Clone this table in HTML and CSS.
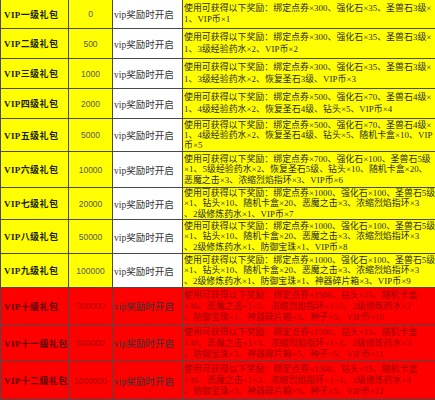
FILE: index.html
```html
<!DOCTYPE html>
<html lang="zh-CN">
<head>
<meta charset="utf-8">
<link rel="stylesheet" href="styles.css">
</head>
<body>
<table class="gifts">
<colgroup><col class="c1"><col class="c2"><col class="c3"><col class="c4"></colgroup>
<tr class="two first">
<td class="name">VIP一级礼包</td><td class="num">0</td><td class="open">vip奖励时开启</td>
<td class="desc">使用可获得以下奖励：绑定点券×300、强化石×35、圣兽石3级×<br>1、VIP币×1</td></tr>
<tr class="two">
<td class="name">VIP二级礼包</td><td class="num">500</td><td class="open">vip奖励时开启</td>
<td class="desc">使用可获得以下奖励：绑定点券×300、强化石×35、圣兽石3级×<br>1、3级经验药水×2、VIP币×2</td></tr>
<tr class="two">
<td class="name">VIP三级礼包</td><td class="num">1000</td><td class="open">vip奖励时开启</td>
<td class="desc">使用可获得以下奖励：绑定点券×300、强化石×35、圣兽石3级×<br>1、3级经验药水×2、恢复圣石3级、VIP币×3</td></tr>
<tr class="two">
<td class="name">VIP四级礼包</td><td class="num">2000</td><td class="open">vip奖励时开启</td>
<td class="desc">使用可获得以下奖励：绑定点券×500、强化石×70、圣兽石4级×<br>1、4级经验药水×2、恢复圣石4级、钻头×5、VIP币×4</td></tr>
<tr class="three r5">
<td class="name">VIP五级礼包</td><td class="num">5000</td><td class="open">vip奖励时开启</td>
<td class="desc">使用可获得以下奖励：绑定点券×500、强化石×70、圣兽石4级×<br>1、4级经验药水×2、恢复圣石4级、钻头×5、随机卡盒×10、VIP<br>币×5</td></tr>
<tr class="three r6">
<td class="name">VIP六级礼包</td><td class="num">10000</td><td class="open">vip奖励时开启</td>
<td class="desc">使用可获得以下奖励：绑定点券×700、强化石×100、圣兽石5级<br>×1、5级经验药水×2、恢复圣石5级、钻头×10、随机卡盒×20、<br>恶魔之击×3、浓缩烈焰指环×3、VIP币×6</td></tr>
<tr class="three r7">
<td class="name">VIP七级礼包</td><td class="num">20000</td><td class="open">vip奖励时开启</td>
<td class="desc">使用可获得以下奖励：绑定点券×1000、强化石×100、圣兽石5级<br>×1、钻头×10、随机卡盒×20、恶魔之击×3、浓缩烈焰指环×3<br>、2级修炼药水×1、VIP币×7</td></tr>
<tr class="three">
<td class="name">VIP八级礼包</td><td class="num">50000</td><td class="open">vip奖励时开启</td>
<td class="desc">使用可获得以下奖励：绑定点券×1000、强化石×100、圣兽石5级<br>×1、钻头×10、随机卡盒×20、恶魔之击×3、浓缩烈焰指环×3<br>、2级修炼药水×1、防御宝珠×1、VIP币×8</td></tr>
<tr class="three">
<td class="name">VIP九级礼包</td><td class="num">100000</td><td class="open">vip奖励时开启</td>
<td class="desc">使用可获得以下奖励：绑定点券×1000、强化石×100、圣兽石5级<br>×1、钻头×10、随机卡盒×20、恶魔之击×3、浓缩烈焰指环×3<br>、2级修炼药水×1、防御宝珠×1、神器碎片箱×3、VIP币×9</td></tr>
<tr class="red">
<td class="name">VIP十级礼包</td><td class="num">300000</td><td class="open">vip奖励时开启</td>
<td class="desc">使用可获得以下奖励：绑定点券×1500、钻头×15、随机卡盒<br>×30、恶魔之击+1×3、浓缩烈焰指环+1×3、2级修炼药水×2<br>、防御宝珠×1、神器碎片箱×3、种子×5、VIP币×10</td></tr>
<tr class="red">
<td class="name">VIP十一级礼包</td><td class="num">500000</td><td class="open">vip奖励时开启</td>
<td class="desc">使用可获得以下奖励：绑定点券×1500、钻头×15、随机卡盒<br>×30、恶魔之击+1×3、浓缩烈焰指环+1×3、2级修炼药水×3<br>、防御宝珠×3、神器碎片箱×5、种子×5、VIP币×11</td></tr>
<tr class="red last">
<td class="name">VIP十二级礼包</td><td class="num">1000000</td><td class="open">vip奖励时开启</td>
<td class="desc">使用可获得以下奖励：绑定点券×1500、钻头×15、随机卡盒<br>×30、恶魔之击+1×3、浓缩烈焰指环+1×3、2级修炼药水×4<br>、防御宝珠×5、神器碎片箱×5、种子×5、VIP币×12</td></tr>
</table>
</body>
</html>
```
FILE: styles.css
```css
html, body {
  margin: 0;
  padding: 0;
  background: #ffffff;
  overflow: hidden;
}
.gifts {
  border-collapse: collapse;
  table-layout: fixed;
  width: 436px;
  font-family: "Liberation Serif", "Noto Sans CJK SC", serif;
  font-size: 9px;
  color: #333333;
}
.c1 { width: 68px; }
.c2 { width: 44px; }
.c3 { width: 70px; }
.c4 { width: 254px; }
.gifts td {
  border: 1px solid #4a4a4a;
  padding: 0;
  vertical-align: middle;
  background: #ffff00;
  white-space: nowrap;
  overflow: hidden;
}
.gifts tr.first td { border-top: none; }
.gifts tr.two td { height: 29px; }
.gifts tr.first td { height: 28px; }
.gifts tr.three td { height: 33px; }
.gifts tr.r5 td { height: 32px; }
.gifts tr.r6 td { height: 35px; }
.gifts tr.r7 td { height: 31px; }
.gifts tr.red td { height: 36px; background: #ff0000; }
.gifts tr.last td { height: 37px; }
.gifts td.open { background: #ffffff; }
.name {
  font-weight: bold;
  color: #1a1a1a;
  padding-left: 3px !important;
  letter-spacing: 0.4px;
}
.num {
  text-align: center;
  font-family: "Liberation Sans", "Noto Sans CJK SC", sans-serif;
  font-size: 8.5px;
  color: #555555;
}
.open {
  padding-left: 1px !important;
  color: #333333;
  font-size: 9.5px;
}
.desc {
  padding-left: 1px !important;
  line-height: 11.5px;
  font-size: 8.9px;
  letter-spacing: 0.05px;
  color: #2a2a2a;
}
tr.three .desc { line-height: 10.3px; }
tr.red .desc { line-height: 11px; }
tr.red .name { color: #5a0000; }
tr.red .num { color: #b00000; }
tr.red .desc { color: #a00000; }
```
